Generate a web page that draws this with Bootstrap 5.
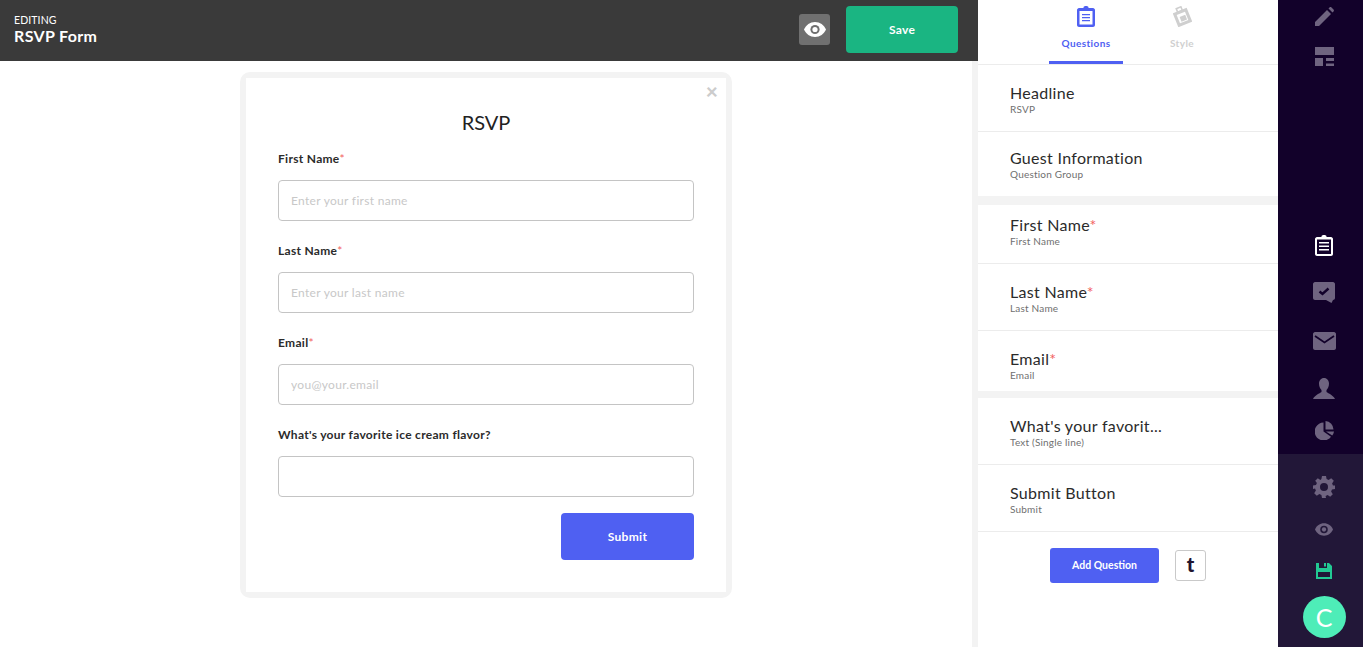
<!DOCTYPE html>
<html lang="en">
<head>
    <meta charset="UTF-8">
    <meta name="viewport" content="width=device-width, initial-scale=1.0">
    <title>RSVP Form</title>
    <link href="https://cdn.jsdelivr.net/npm/bootstrap@5.3.3/dist/css/bootstrap.min.css" rel="stylesheet">
    <style>
        html, body { height: 647px; overflow: hidden; }
        body { font-family: Lato, "Liberation Sans", sans-serif; color: #2b2b2b; background: #fff; }
        .app-shell { height: 647px; }
        .work-area { width: 978px; }
        .top-bar { height: 61px; background: #3a3a3a; color: #fff; padding: 6px 20px 8px 14px; }
        .edit-label { font-size: 10.5px; line-height: 14px; margin-top: 7px; letter-spacing: .1px; }
        .edit-name { font-size: 16px; line-height: 18px; font-weight: 700; letter-spacing: .35px; }
        .preview-btn { width: 31px; height: 31px; background: #707070; border-radius: 3px; margin-right: 16px; }
        .save-btn { width: 112px; height: 47px; background: #1ab582; border: 0; border-radius: 4px; color: #fff; font-size: 12px; font-weight: 700; letter-spacing: .3px; }
        .canvas-area { height: 586px; padding-top: 11px; border-right: 6px solid #f3f3f3; }
        .form-frame { width: 492px; height: 526px; padding: 6px; border-radius: 10px; background: #f3f3f3; }
        .form-sheet { height: 514px; background: #fff; padding: 32px 32px 0; position: relative; }
        .close-x { position: absolute; top: 3px; right: 8px; color: #cccccc; font-size: 21px; line-height: 20px; font-weight: 900; }
        .form-title { font-size: 20px; line-height: 24px; font-weight: 400; text-align: center; margin: 0 0 17px; color: #222; }
        .field-block { margin-bottom: 22px; }
        .field-label { display: block; font-size: 12px; line-height: 16px; font-weight: 700; letter-spacing: .3px; margin-bottom: 13px; color: #2b2b2b; }
        .req { color: #f25f5f; font-weight: 400; }
        .field-input.form-control { height: 41px; border: 1px solid #c4c4c4; border-radius: 4px; font-size: 12px; padding: 0 12px; letter-spacing: .3px; }
        .field-input.form-control::placeholder { color: #c8c8c8; opacity: 1; }
        .submit-btn { width: 133px; height: 47px; background: #4f60f2; border: 0; border-radius: 4px; color: #fff; font-size: 12px; font-weight: 700; letter-spacing: .3px; margin-top: -6px; }
        .side-panel { width: 300px; background: #fff; }
        .tab-row { height: 65px; border-bottom: 1px solid #ececec; padding-left: 71px; }
        .tab-item { width: 74px; height: 64px; margin-right: 22px; text-align: center; font-size: 10px; font-weight: 700; color: #cfcfcf; padding-top: 6px; letter-spacing: .4px; line-height: 14px; }
        .tab-item svg { display: block; margin: 0 auto 9px; }
        .tab-on { color: #4f60f2; border-bottom: 3px solid #4f60f2; }
        .q-row { padding: 18px 32px 0; height: 67px; border-bottom: 1px solid #ececec; }
        .q-group { height: 64px; padding-top: 16px; border-bottom: 0; }
        .q-first { height: 59px; padding-top: 10px; }
        .q-third { height: 60px; border-bottom: 0; }
        .q-title { font-size: 16px; line-height: 19px; letter-spacing: .3px; color: #2b2b2b; }
        .q-sub { font-size: 10px; line-height: 12px; letter-spacing: .2px; color: #6f6f6f; margin-top: 1px; }
        .q-gap-big { height: 9px; background: #f3f3f3; }
        .q-gap-small { height: 7px; background: #f3f3f3; }
        .add-row { padding-top: 16px; padding-left: 72px; }
        .add-btn { width: 109px; height: 35px; background: #4f60f2; border: 0; border-radius: 3px; color: #fff; font-size: 10.5px; font-weight: 700; }
        .type-btn { width: 31px; height: 31px; margin-left: 16px; background: #fff; border: 1px solid #c9c9c9; border-radius: 3px; color: #21142f; font-size: 20px; font-weight: 900; line-height: 26px; text-align: center; }
        .icon-rail { width: 85px; background: #12012a; }
        .rail-top { height: 454px; padding-left: 7px; }
        .rail-bottom { height: 193px; background: #221738; padding-left: 7px; padding-top: 16px; }
        .rail-h32 { height: 32px; }
        .rail-h34 { height: 34px; }
        .rail-h40 { height: 40px; }
        .rail-h44 { height: 44px; }
        .rail-h48 { height: 48px; }
        .rail-h50 { height: 50px; }
        .rail-h54 { height: 54px; }
        .rail-spacer { height: 145px; }
        .rail-avatar { width: 43px; height: 42px; margin-top: 8px; border-radius: 50%; background: #4eedb8; color: #fff; font-size: 25px; font-weight: 400; line-height: 42px; text-align: center; }
    </style>
</head>
<body>
    <div class="app-shell d-flex">
        <div class="work-area d-flex flex-column">
            <div class="top-bar d-flex align-items-center">
                <div class="flex-grow-1 align-self-start">
                    <div class="edit-label">EDITING</div>
                    <div class="edit-name">RSVP Form</div>
                </div>
                <div class="preview-btn d-flex align-items-center justify-content-center">
                    <svg width="22" height="15" viewBox="0 0 22 15"><path fill="#fff" d="M11 0C6 0 2 3 0 7.500 2 12 6 15 11 15s9-3 11-7.500C20 3 16 0 11 0z"/><circle cx="11" cy="7.500" r="4.600" fill="#707070"/><circle cx="11" cy="7.500" r="2.600" fill="#fff"/></svg>
                </div>
                <button type="button" class="save-btn">Save</button>
            </div>
            <div class="canvas-area d-flex justify-content-center align-items-start">
                <div class="form-frame">
                    <form class="form-sheet">
                        <span class="close-x">×</span>
                        <h1 class="form-title">RSVP</h1>
                        <div class="field-block">
                            <label class="field-label">First Name<span class="req">*</span></label>
                            <input type="text" class="form-control field-input" placeholder="Enter your first name">
                        </div>
                        <div class="field-block">
                            <label class="field-label">Last Name<span class="req">*</span></label>
                            <input type="text" class="form-control field-input" placeholder="Enter your last name">
                        </div>
                        <div class="field-block">
                            <label class="field-label">Email<span class="req">*</span></label>
                            <input type="text" class="form-control field-input" placeholder="you@your.email">
                        </div>
                        <div class="field-block">
                            <label class="field-label">What's your favorite ice cream flavor?</label>
                            <input type="text" class="form-control field-input">
                        </div>
                        <div class="text-end">
                            <button type="button" class="submit-btn">Submit</button>
                        </div>
                    </form>
                </div>
            </div>
        </div>

        <div class="side-panel">
            <div class="tab-row d-flex">
                <div class="tab-item tab-on">
                    <svg width="18" height="21" viewBox="0 0 18 21"><path fill="#4f60f2" d="M2 2h4.500V1.500C6.500.5 7.500 0 9 0s2.500.5 2.500 1.500V2H16c1 0 2 1 2 2v15c0 1-1 2-2 2H2c-1 0-2-1-2-2V4c0-1 1-2 2-2z"/><rect x="2.500" y="5" width="13" height="13.500" fill="#fff"/><path fill="#4f60f2" d="M5 8h8v1.300H5zM5 11h8v1.300H5zM5 14h8v1.300H5z"/></svg>
                    Questions
                </div>
                <div class="tab-item">
                    <svg width="19" height="21" viewBox="0 0 19 21"><g transform="rotate(-22 9.500 11.500)"><rect x="3.500" y="5.500" width="12" height="12" fill="none" stroke="#cfcfcf" stroke-width="3"/><rect x="7" y="1" width="5" height="4" fill="none" stroke="#cfcfcf" stroke-width="1.600"/><rect x="7" y="10" width="6" height="5" fill="#cfcfcf"/></g></svg>
                    Style
                </div>
            </div>
            <div class="q-row"><div class="q-title">Headline</div><div class="q-sub">RSVP</div></div>
            <div class="q-row q-group"><div class="q-title">Guest Information</div><div class="q-sub">Question Group</div></div>
            <div class="q-gap-big"></div>
            <div class="q-row q-first"><div class="q-title">First Name<span class="req">*</span></div><div class="q-sub">First Name</div></div>
            <div class="q-row"><div class="q-title">Last Name<span class="req">*</span></div><div class="q-sub">Last Name</div></div>
            <div class="q-row q-third"><div class="q-title">Email<span class="req">*</span></div><div class="q-sub">Email</div></div>
            <div class="q-gap-small"></div>
            <div class="q-row"><div class="q-title">What's your favorit...</div><div class="q-sub">Text (Single line)</div></div>
            <div class="q-row"><div class="q-title">Submit Button</div><div class="q-sub">Submit</div></div>
            <div class="add-row d-flex align-items-center">
                <button type="button" class="add-btn">Add Question</button>
                <div class="type-btn">t</div>
            </div>
        </div>

        <div class="icon-rail d-flex flex-column">
            <div class="rail-top d-flex flex-column align-items-center">
                <div class="rail-h32 d-flex align-items-center justify-content-center">
                    <svg width="19" height="19" viewBox="0 0 19 19"><path fill="#6f6480" d="M0 19v-4L12 3l4 4L4 19zM13.500 1.500l1-1c.6-.6 1.400-.6 2 0l2 2c.6.6.6 1.400 0 2l-1 1z"/></svg>
                </div>
                <div class="rail-h48 d-flex align-items-center justify-content-center">
                    <svg width="19" height="19" viewBox="0 0 19 19"><path fill="#6f6480" d="M0 0h19v8H0zM0 11h8v8H0zM11 11h8v3h-8zM11 16.500h8V19h-8z"/></svg>
                </div>
                <div class="rail-spacer"></div>
                <div class="rail-h40 d-flex align-items-center justify-content-center">
                    <svg width="18" height="21" viewBox="0 0 18 21"><path fill="#fff" d="M2 2h4.500V1.500C6.500.5 7.500 0 9 0s2.500.5 2.500 1.500V2H16c1 0 2 1 2 2v15c0 1-1 2-2 2H2c-1 0-2-1-2-2V4c0-1 1-2 2-2z"/><rect x="2" y="4.500" width="14" height="14.500" fill="#12012a"/><path fill="#fff" d="M4 7h10v1.500H4zM4 10.500h10V12H4zM4 14h10v1.500H4z"/></svg>
                </div>
                <div class="rail-h54 d-flex align-items-center justify-content-center">
                    <svg width="22" height="21" viewBox="0 0 22 21"><path fill="#6f6480" d="M2 0h18c1 0 2 1 2 2v14c0 1-1 2-2 2l-1.500 3-5.500-3H2c-1 0-2-1-2-2V2C0 1 1 0 2 0z"/><path fill="none" stroke="#12012a" stroke-width="2.400" d="M6.500 9.500l3 2.500 6-5.500"/></svg>
                </div>
                <div class="rail-h44 d-flex align-items-center justify-content-center">
                    <svg width="23" height="18" viewBox="0 0 23 18"><path fill="#6f6480" d="M2 0h19c1 0 2 1 2 2v14c0 1-1 2-2 2H2c-1 0-2-1-2-2V2C0 1 1 0 2 0z"/><path fill="none" stroke="#12012a" stroke-width="1.800" d="M2 4l9.500 6.500L21 4"/></svg>
                </div>
                <div class="rail-h50 d-flex align-items-center justify-content-center">
                    <svg width="22" height="21" viewBox="0 0 22 21"><path fill="#6f6480" d="M11 0c3 0 5 2.500 5 5.500 0 3-1 5-2.500 6.500v2c2 1.500 6.500 3 8.500 7H0c2-4 6.500-5.500 8.500-7v-2C7 10.500 6 8.500 6 5.500 6 2.500 8 0 11 0z"/></svg>
                </div>
                <div class="rail-h34 d-flex align-items-center justify-content-center">
                    <svg width="19" height="19" viewBox="0 0 19 19"><path fill="#6f6480" d="M8.500 1.500v9l7.500 5.200A9 9 0 1 1 8.500 1.500z"/><path fill="#6f6480" d="M10.500 0a8.500 8.500 0 0 1 8 8.500h-8z"/><path fill="#6f6480" d="M11 10.500h8a9 9 0 0 1-1.800 4z"/></svg>
                </div>
            </div>
            <div class="rail-bottom d-flex flex-column align-items-center">
                <div class="rail-h34 d-flex align-items-center justify-content-center">
                    <svg width="22" height="22" viewBox="0 0 22 22"><path fill="#6f6480" fill-rule="evenodd" d="M9 0h4l.6 3 2 .9L18.200 2.200l2.600 2.600-1.700 2.600.9 2L22 9.500v3.500l-3 .6-.9 2 1.700 2.600-2.600 2.600-2.600-1.700-2 .9L13 22H9l-.6-3-2-.9-2.600 1.700-2.600-2.600 1.700-2.600-.9-2L0 13V9.500l3-.6.900-2L2.200 4.800l2.600-2.600 2.600 1.700 1-.9zM11 7a4 4 0 1 0 0 8 4 4 0 0 0 0-8z"/></svg>
                </div>
                <div class="rail-h50 d-flex align-items-center justify-content-center">
                    <svg width="18" height="13" viewBox="0 0 22 15"><path fill="#6f6480" d="M11 0C6 0 2 3 0 7.500 2 12 6 15 11 15s9-3 11-7.500C20 3 16 0 11 0z"/><circle cx="11" cy="7.500" r="4.600" fill="#221738"/><circle cx="11" cy="7.500" r="2.600" fill="#6f6480"/></svg>
                </div>
                <div class="rail-h34 d-flex align-items-center justify-content-center">
                    <svg width="16" height="16" viewBox="0 0 16 16"><path fill="#22c993" fill-rule="evenodd" d="M0 0h3v5h8V0h2l3 3v13H0zM8 0h2v3.500H8zM2 9v5h12V9z"/></svg>
                </div>
                <div class="rail-avatar">C</div>
            </div>
        </div>
    </div>
    <script src="https://cdn.jsdelivr.net/npm/bootstrap@5.3.3/dist/js/bootstrap.bundle.min.js"></script>
</body>
</html>
